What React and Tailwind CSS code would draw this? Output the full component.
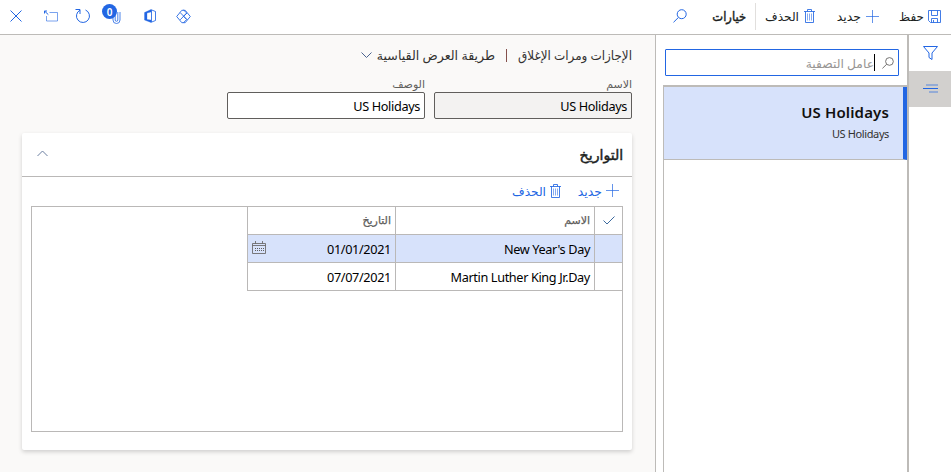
import React from "react";

const Svg = ({ w, h, vb, className = "", children }) => (
  <svg
    width={w}
    height={h}
    viewBox={vb || `0 0 ${w} ${h}`}
    fill="none"
    stroke="currentColor"
    strokeWidth="1"
    className={`block shrink-0 ${className}`}
  >
    {children}
  </svg>
);

const Plus = ({ className = "" }) => (
  <Svg w={13} h={13} className={className}>
    <path d="M6.5 0v13M0 6.5h13" strokeOpacity="0.7" />
  </Svg>
);

const Trash = ({ className = "" }) => (
  <Svg w={11} h={14} className={className}>
    <path d="M0 2.5h11M3.5 2.5v-2h4v2M1.5 2.5v11h8v-11" strokeOpacity="0.85" />
    <path d="M3.5 4.5v7M5.5 4.5v7M7.5 4.5v7" strokeOpacity="0.55" />
  </Svg>
);

const Magnifier = ({ w = 14, h = 14, className = "" }) => (
  <Svg w={w} h={h} vb="0 0 14 14" className={className}>
    <circle cx="8.7" cy="5.2" r="4.5" />
    <path d="M5.4 8.5L0.5 13.3" />
  </Svg>
);

const Label = ({ className = "", children }) => (
  <span className={`block shrink-0 whitespace-nowrap ${className}`}>{children}</span>
);

function TopBar() {
  return (
    <header className="flex h-[35px] items-center border-b border-[#bdbbb8] bg-white pr-[10px] pb-[2px] pl-[9px] text-[#201f1e]">
      <Svg w={13} h={13} className="text-[#2266e3]">
        <path d="M0.5 0.5h12v12h-10l-2-2zM3.5 0.5v5h6v-5M3.5 12.5v-4h6v4M5.5 10v2.5" strokeOpacity="0.85" />
      </Svg>
      <Label className="mr-[4px] w-[25px] pt-[2px] text-[12px]">حفظ</Label>
      <Plus className="mr-[20px] text-[#2266e3]" />
      <Label className="mr-[5px] w-[25px] pt-[3px] text-[12.5px]">جديد</Label>
      <Trash className="mr-[21px] text-[#2266e3]" />
      <Label className="mr-[5px] w-[34px] pt-[3px] text-[12.2px]">الحذف</Label>
      <div className="mr-[9px] h-[27px] w-px bg-[#e1dfdd]" />
      <Label className="mr-[9px] w-[35px] origin-right scale-x-[0.92] pt-[3px] text-[12.5px] [-webkit-text-stroke:0.45px_#201f1e]">
        خيارات
      </Label>
      <Magnifier className="mr-[24px] text-[#2266e3]" />
      <div className="mr-auto flex items-center text-[#2266e3]">
        <Svg w={15} h={15} className="ml-[20px]">
          <path
            d="M5.800 1.300h3.400L14.300 7.500L9.200 13.700H5.800L0.700 7.500zM4.200 3.600L10.800 10.400L7.500 13.700M10.800 4L4.200 10.800M7.500 1L10.800 4L7.500 7.300L10.800 10.600"
            strokeLinejoin="round"
            strokeWidth="0.9"
          />
        </Svg>
        <Svg w={12} h={14} className="ml-[22px]">
          <path d="M0.500 3.500L7 0.500v2.500L3 4v6.500l4 0.500v2.500L0.500 11z" fill="currentColor" strokeWidth="0.3" />
          <path d="M7 0.700l4.500 1.800v9l-4.500 1.800M7.500 1v12" strokeOpacity="0.85" />
        </Svg>
        <div className="relative ml-[11px] h-[20px] w-[20px]">
          <Svg w={9} h={14} className="absolute top-[4px] left-[10px]">
            <path d="M8 2v8a3.500 3.500 0 0 1-7 0V3M5.800 2v8a1.300 1.300 0 0 1-2.600 0V3" strokeOpacity="0.8" />
          </Svg>
          <span className="absolute -top-[2px] left-0 flex h-[15px] w-[15px] items-center justify-center rounded-full bg-[#2266e3] text-[10px] leading-none font-semibold text-white">
            0
          </span>
        </div>
        <Svg w={16} h={16} className="ml-[17px]">
          <path d="M5 2.200A6.500 6.500 0 1 0 10.500 2M0.500 1.500H5V6" />
        </Svg>
        <Svg w={14} h={12} className="ml-[22px]">
          <path d="M5.500 2.500h8v8.500h-11V6" strokeOpacity="0.6" />
          <path d="M0.800 1.300l3.500 3.300M0.500 3.500V1H3" />
        </Svg>
        <Svg w={12} h={12} className="ml-[1px]">
          <path d="M0.500 0.500l11 11M11.500 0.500l-11 11" />
        </Svg>
      </div>
    </header>
  );
}

const Field = ({ label, value, boxClass }) => (
  <div className="shrink-0">
    <Label className="h-[16px] text-[11px] leading-[16px] text-[#605e5c]">{label}</Label>
    <div
      dir="ltr"
      className={`flex h-[27px] items-center justify-end rounded-[2px] border border-[#605e5c] pt-[2px] pr-[4px] text-[12.7px] text-black ${boxClass}`}
    >
      <Label className="tracking-[-0.35px]">{value}</Label>
    </div>
  </div>
);

const rows = [
  { name: "New Year's Day", date: "01/01/2021", selected: true },
  { name: "Martin Luther King Jr.Day", date: "07/07/2021", selected: false },
];

function DatesGrid() {
  return (
    <div className="mx-[9px] h-[226px] border border-[#bab8b7]">
      <div className="flex h-[28px] w-[375px] items-stretch border-b border-l border-[#bab8b7] text-[11px] text-[#605e5c]">
        <div className="flex w-[28px] items-center justify-center border-l border-[#bab8b7] text-[#3d6a9e]">
          <Svg w={12} h={9}>
            <path d="M0.500 4.500l3.500 3.500L11.500 0.500" />
          </Svg>
        </div>
        <div className="flex w-[199px] items-center border-l border-[#bab8b7] pr-[4px]">
          <Label className="[-webkit-text-stroke:0.25px_#605e5c]">الاسم</Label>
        </div>
        <div className="flex flex-1 items-center pr-[4px]">
          <Label className="[-webkit-text-stroke:0.25px_#605e5c]">التاريخ</Label>
        </div>
      </div>
      {rows.map((r) => (
        <div
          key={r.date}
          className={`flex h-[28px] w-[375px] items-stretch border-b border-l border-[#bab8b7] text-[12.7px] text-black ${r.selected ? "bg-[#d7e2fb]" : "bg-white"}`}
        >
          <div className="w-[28px] border-l border-[#bab8b7]" />
          <div className="flex w-[199px] items-center border-l border-[#bab8b7] pt-[2px] pr-[4px]">
            <Label className="tracking-[-0.36px]">
              <bdi dir="ltr">{r.name}</bdi>
            </Label>
          </div>
          <div className="flex flex-1 items-center justify-between pt-[2px] pr-[4px] pl-[4px]">
            <Label className="tracking-[-0.35px]">
              <bdi dir="ltr">{r.date}</bdi>
            </Label>
            {r.selected && (
              <Svg w={14} h={13} className="-mt-[5px] text-[#605e5c]">
                <path d="M0.500 2.500h13v10h-13zM0.500 4.500h13M3.500 0v2.500M10.500 0v2.500" strokeOpacity="0.8" />
                <path d="M3 7.500h9M3 9.500h9" strokeDasharray="1 1" />
              </Svg>
            )}
          </div>
        </div>
      ))}
    </div>
  );
}

function MainForm() {
  return (
    <main className="w-[655px] bg-[#faf9f8] pr-[23px] pl-[22px]">
      <div className="flex h-[41px] items-center text-[12.6px] text-[#323130]">
        <Label className="w-[114px] origin-right scale-x-[0.95] pt-[2px]">الإجازات ومرات الإغلاق</Label>
        <span className="mr-[11px] h-[13px] w-px shrink-0 bg-[#84504c]" />
        <Label className="mr-[11px] w-[119px] pt-[2px]">طريقة العرض القياسية</Label>
        <Svg w={11} h={7} className="mr-[4px] text-[#4a6390]">
          <path d="M0.500 0.500l5 5 5-5" />
        </Svg>
      </div>
      <div className="flex gap-[9px]">
        <Field label="الاسم" value="US Holidays" boxClass="w-[198px] bg-[#f3f2f1]" />
        <Field label="الوصف" value="US Holidays" boxClass="w-[198px] bg-white" />
      </div>
      <section className="mt-[14px] h-[317px] w-[610px] rounded-[2px] bg-white shadow-[0_2px_4px_rgba(0,0,0,0.17)]">
        <div className="flex h-[44px] items-center justify-between border-b border-[#bab8b7] pr-[9px] pl-[15px]">
          <Label className="origin-right scale-x-[1.01] text-[14px] text-[#201f1e] [-webkit-text-stroke:0.45px_#201f1e]">
            التواريخ
          </Label>
          <Svg w={11} h={7} className="-mt-[2px] text-[#6b7fa0]">
            <path d="M0.500 6l5-5 5 5" />
          </Svg>
        </div>
        <div className="flex h-[29px] items-center pr-[13px] pb-[2px] text-[#2266e3]">
          <Plus />
          <Label className="mr-[4px] w-[25px] pt-[3px] text-[12.5px]">جديد</Label>
          <Trash className="mr-[16px]" />
          <Label className="mr-[4px] w-[34px] pt-[3px] text-[12.2px]">الحذف</Label>
        </div>
        <DatesGrid />
      </section>
    </main>
  );
}

function ListPane() {
  return (
    <aside className="flex flex-1 flex-col border-r-2 border-l border-[#bdbbb8] bg-white pl-[7px]">
      <div className="mt-[14px] mr-[8px] ml-[2px] flex h-[27px] shrink-0 items-center rounded-[1px] border border-[#2266e3] pr-[4px]">
        <Magnifier w={12} h={12} className="text-[#605e5c]" />
        <div className="mr-[7px] flex h-[17px] items-center border-r border-black pt-[4px] text-[12.3px]">
          <Label className="text-[#979593]">عامل التصفية</Label>
        </div>
      </div>
      <div className="mt-[9px] flex-1 border-t-2 border-l border-[#bdbbb8]">
        <div
          dir="ltr"
          className="flex h-[73px] flex-col items-end border-r-4 border-b border-r-[#2266e3] border-b-[#bdbbb8] bg-[#d7e2fb] pt-[14px] pr-[14px]"
        >
          <Label className="text-[15px] leading-[22px] font-semibold tracking-[0.15px] text-[#11100f]">
            US Holidays
          </Label>
          <Label className="text-[11px] leading-[21px] tracking-[-0.38px] text-[#323130]">US Holidays</Label>
        </div>
      </div>
    </aside>
  );
}

function SideRail() {
  return (
    <nav className="w-[42px] bg-white text-[#2266e3]">
      <div className="flex h-[36px] items-center justify-center">
        <Svg w={15} h={14}>
          <path d="M0.500 0.500h14l-5.500 6.500v6.500l-3-2v-4.500z" />
        </Svg>
      </div>
      <div className="flex h-[36px] items-center justify-center bg-[#d2d0ce]">
        <Svg w={15} h={10}>
          <path d="M3 1h12M6 8h9" strokeWidth="2" strokeOpacity="0.35" />
          <path d="M0 4.500h15" />
        </Svg>
      </div>
    </nav>
  );
}

export default function App() {
  return (
    <div
      dir="rtl"
      className="flex h-[472px] w-[951px] flex-col overflow-hidden bg-white font-['Noto_Sans','DejaVu_Sans',sans-serif]"
    >
      <TopBar />
      <div className="flex flex-1">
        <SideRail />
        <ListPane />
        <MainForm />
      </div>
    </div>
  );
}
